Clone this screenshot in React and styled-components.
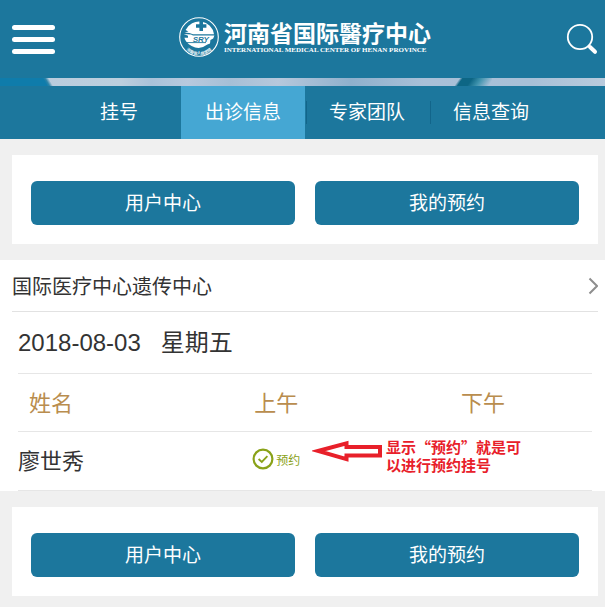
import React from "react"
import styled, { createGlobalStyle } from "styled-components"

const cjk = `"Noto Sans CJK SC", sans-serif`

const tabs = [
  { label: "挂号" },
  { label: "出诊信息", active: true },
  { label: "专家团队", divided: true },
  { label: "信息查询", divided: true },
]

const Emblem = () => (
  <svg width="40" height="40" viewBox="0 0 40 40" aria-hidden="true">
    <defs>
      <path id="ring" d="M1.8 20 A18.2 18.2 0 0 0 38.2 20" />
    </defs>
    <circle cx="20" cy="20" r="19.3" fill="none" stroke="#fff" strokeWidth="1.1" />
    <path d="M6.6 13 A15 15 0 0 1 35 17.2 H14 L10.4 16 L5.6 15.6 L9.4 14.6 Z" fill="#fff" />
    <path
      d="M4.8 17 L12 17.6 L14 18.4 H35.4 L34.2 21.6 L31.4 23 L31 26.6 L28.4 27.6 Q21 33.4 12.6 29 Q6.5 25.5 5.4 20.8 H9 V18.8 Z"
      fill="#fff"
    />
    <path d="M20.4 4 H24 V7.2 H27.4 V10.8 H24 V14 H20.4 V10.8 H17 V7.2 H20.4 Z" fill="#1c779d" />
    <text
      x="21.8"
      y="24.6"
      textAnchor="middle"
      fontFamily="Liberation Sans, sans-serif"
      fontSize="8"
      fontWeight="700"
      fontStyle="italic"
      fill="#1c779d"
    >
      SRY
    </text>
    <path d="M7 25.6 H27" stroke="#1c779d" strokeWidth="0.9" />
    <text fontFamily="Noto Sans CJK SC, sans-serif" fontSize="4" fontWeight="700" fill="#fff">
      <textPath href="#ring" startOffset="50%" textAnchor="middle">
        河南省人民医院
      </textPath>
    </text>
  </svg>
)

const Actions = () => (
  <ActionCard>
    <ActionButton type="button">用户中心</ActionButton>
    <ActionButton type="button">我的预约</ActionButton>
  </ActionCard>
)

const App = () => (
  <>
    <GlobalStyle />
    <Header>
      <MenuButton type="button" aria-label="菜单">
        <span />
        <span />
        <span />
      </MenuButton>
      <Brand href="#">
        <Emblem />
        <div>
          <strong>河南省国际醫疗中心</strong>
          <small>INTERNATIONAL MEDICAL CENTER OF HENAN PROVINCE</small>
        </div>
      </Brand>
      <SearchButton type="button" aria-label="搜索">
        <svg width="32" height="32" viewBox="0 0 32 32">
          <circle cx="14" cy="14" r="12.2" fill="none" stroke="#fff" strokeWidth="1.8" />
          <path d="M22.5 22.5 L24 24" stroke="#fff" strokeWidth="2.4" />
          <path d="M24 24 L29 28.8" stroke="#fff" strokeWidth="4" strokeLinecap="round" />
        </svg>
      </SearchButton>
    </Header>
    <Banner />
    <Nav>
      {tabs.map(tab => (
        <Tab key={tab.label} href="#" $active={tab.active} $divided={tab.divided}>
          {tab.label}
        </Tab>
      ))}
    </Nav>
    <main>
      <Actions />
      <Department>
        <DepartmentLink href="#">
          国际医疗中心遗传中心
          <svg width="11" height="18" viewBox="0 0 11 18" aria-hidden="true">
            <path d="M2.5 1.5 L10 9 L2.5 16.5" fill="none" stroke="#8e8e8e" strokeWidth="2" />
          </svg>
        </DepartmentLink>
        <Day>
          <span>2018-08-03</span>
          <span>星期五</span>
        </Day>
        <Schedule>
          <thead>
            <tr>
              <th>姓名</th>
              <th>上午</th>
              <th>下午</th>
            </tr>
          </thead>
          <tbody>
            <tr>
              <td>廖世秀</td>
              <td>
                <Booking href="#">
                  <svg width="22" height="22" viewBox="0 0 22 22" aria-hidden="true">
                    <circle cx="11" cy="11" r="9.4" fill="none" stroke="#8aa219" strokeWidth="2.2" />
                    <path d="M6.6 11 L9.8 14 L15.4 8.2" fill="none" stroke="#8aa219" strokeWidth="1.8" />
                  </svg>
                  预约
                </Booking>
              </td>
              <td>
                <Hint>
                  <svg width="70" height="22" viewBox="0 0 70 22" aria-hidden="true">
                    <path
                      d="M6 11 L34.5 3.4 V7 H68 V15.5 H34.5 V19.2 Z"
                      fill="#fff"
                      stroke="#e8202a"
                      strokeWidth="4"
                    />
                  </svg>
                  <p>
                    <span>显示“预约”就是可</span>
                    <span>以进行预约挂号</span>
                  </p>
                </Hint>
              </td>
            </tr>
          </tbody>
        </Schedule>
      </Department>
      <Actions />
    </main>
  </>
)

export default App

const GlobalStyle = createGlobalStyle`
  * {
    box-sizing: border-box;
  }
  body {
    background-color: #f0f0f0;
    color: #333;
    font-family: "Liberation Sans", ${cjk};
    margin: 0;
  }
  a {
    color: inherit;
    text-decoration: none;
  }
  button {
    border: 0;
    cursor: pointer;
    font-family: inherit;
    padding: 0;
  }
  svg {
    display: block;
    flex-shrink: 0;
  }
`

const Header = styled.header`
  align-items: center;
  background-color: #1c779d;
  display: grid;
  grid-template-columns: 1fr auto 1fr;
  height: 78px;
  padding: 0 7px 0 12px;
`

const MenuButton = styled.button`
  background: none;
  display: flex;
  flex-direction: column;
  gap: 7px;
  width: 43px;
  span {
    background-color: #fff;
    border-radius: 3px;
    height: 5px;
  }
`

const Brand = styled.a`
  align-items: center;
  color: #fff;
  display: flex;
  gap: 5px;
  padding-bottom: 4px;
  strong {
    display: block;
    font-family: ${cjk};
    font-size: 23px;
    font-weight: 700;
    line-height: 26px;
  }
  small {
    display: block;
    font-family: "Liberation Serif", serif;
    font-size: 7px;
    font-weight: 700;
    line-height: 10px;
    white-space: nowrap;
  }
`

const SearchButton = styled.button`
  background: none;
  justify-self: end;
`

const Banner = styled.div`
  background:
    linear-gradient(60deg, #0f7cab 41px, #2d84a9 43px, transparent 46px),
    linear-gradient(125deg, transparent 17%, #0d6685 24%, #0d6685 45%, #3f93ae 65%, transparent 92%)
      80% 0 / 40px 8px no-repeat,
    linear-gradient(
      90deg,
      #b9cbdd,
      #bccfde 20%,
      #a9c2d9 25%,
      #b7c9de 31%,
      #a6bfd6 38%,
      #b6c8dc 46%,
      #8fb0cc 58%,
      #a9c0d8 70%,
      #a8c0d7 88%,
      #b9cbdd
    );
  height: 8px;
`

const Nav = styled.nav`
  background-color: #1c779d;
  display: flex;
  justify-content: center;
  padding: 0 7px 0 12px;
`

const Tab = styled.a`
  background: ${({ $active, $divided }) =>
    $active
      ? "#45a7d3"
      : $divided
        ? "linear-gradient(#12658a, #12658a) 1px 50% / 1px 23px no-repeat"
        : "none"};
  color: #fff;
  font-size: 19px;
  line-height: 53px;
  text-align: center;
  width: 124px;
`

const ActionCard = styled.section`
  background-color: #fff;
  display: flex;
  gap: 20px;
  margin: 16px 7px 16px 12px;
  padding: 26px 19px 19px;
`

const ActionButton = styled.button`
  background-color: #1c779d;
  border-radius: 6px;
  color: #fff;
  flex: 1;
  font-size: 19px;
  height: 44px;
  padding-bottom: 4px;
`

const Department = styled.section`
  background-color: #fff;
`

const DepartmentLink = styled.a`
  align-items: center;
  border-bottom: 1px solid #e2e2e2;
  display: flex;
  font-size: 20px;
  height: 52px;
  justify-content: space-between;
  margin: 0 7px 0 12px;
`

const Day = styled.div`
  border-bottom: 1px solid #e6e6e6;
  display: flex;
  font-size: 24px;
  gap: 20px;
  line-height: 61px;
  margin: 0 13px 0 18px;
`

const Schedule = styled.table`
  border-collapse: separate;
  border-spacing: 0;
  margin-left: 18px;
  table-layout: fixed;
  width: calc(100% - 31px);
  th,
  td {
    border-bottom: 1px solid #e6e6e6;
    font-size: 22px;
    font-weight: 400;
    height: 58px;
    padding: 0 0 4px;
    position: relative;
    text-align: center;
  }
  th {
    color: #b98d4e;
  }
  td {
    height: 59px;
  }
  th:first-child {
    padding-left: 11px;
    width: 28%;
  }
  th:nth-child(2) {
    width: 34%;
  }
  th:first-child,
  td:first-child {
    text-align: left;
  }
`

const Booking = styled.a`
  align-items: center;
  color: #8aa219;
  display: flex;
  font-size: 12px;
  gap: 2px;
  justify-content: center;
`

const Hint = styled.div`
  align-items: center;
  color: #e8202a;
  display: flex;
  gap: 4px;
  left: -62px;
  position: absolute;
  top: 6px;
  svg {
    margin-bottom: 10px;
  }
  p {
    display: flex;
    flex-direction: column;
    font-family: ${cjk};
    font-size: 15px;
    font-weight: 700;
    line-height: 18px;
    margin: 0;
    text-align: left;
    white-space: nowrap;
  }
`
